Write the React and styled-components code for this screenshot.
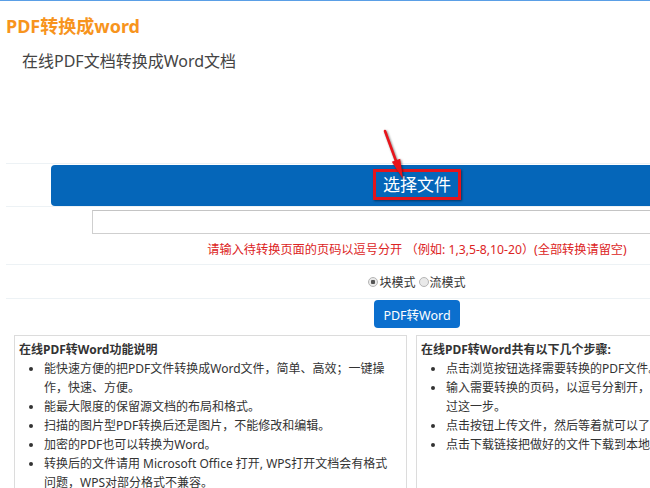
import React from "react";
import styled, { createGlobalStyle } from "styled-components";

const Global = createGlobalStyle`
  html, body { margin: 0; padding: 0; background: #fff; overflow: hidden; }
  body { font-family: "Noto Sans", "Noto Sans CJK SC", sans-serif; color: #333; }
  * { box-sizing: border-box; }
`;

const TopLine = styled.div`
  height: 1px;
  background: #5a9fe6;
`;

const Page = styled.div`
  position: relative;
  margin-left: 6px;
  width: 822px;
`;

const Title = styled.h1`
  margin: 15px 0 0;
  font-size: 18px;
  line-height: 21px;
  font-weight: 700;
  color: #f7941d;
`;

const Subtitle = styled.h2`
  margin: 14px 0 0;
  padding-left: 16px;
  font-size: 16px;
  line-height: 20px;
  font-weight: 400;
  color: #444;
`;

const Form = styled.div`
  margin-top: 92px;
`;

const BarRow = styled.div`
  border-top: 1px solid #edf2f5;
  border-bottom: 1px solid #edf2f5;
  padding: 1px 45px 0;
`;

const ChooseBar = styled.div`
  height: 41px;
  border-radius: 4px;
  background: #0566b9;
  display: flex;
  align-items: center;
  justify-content: center;
`;

const Marked = styled.span`
  display: inline-flex;
  align-items: center;
  justify-content: center;
  width: 88px;
  height: 31px;
  margin-top: -2px;
  border: 3px solid #e5141b;
  box-shadow: 1px 1px 2px rgba(0, 0, 0, 0.45);
  color: #fff;
  font-size: 17px;
  line-height: 20px;
`;

const Arrow = styled.svg`
  position: absolute;
  left: 369px;
  top: 110px;
  width: 36px;
  height: 60px;
  overflow: visible;
  filter: drop-shadow(1.5px 1.5px 1px rgba(0, 0, 0, 0.5));
`;

const InputWrap = styled.div`
  padding: 3px 80px 0 86px;
`;

const PageInput = styled.input`
  display: block;
  width: 100%;
  height: 24px;
  border: 1px solid #cfcfcf;
  border-top-color: #c4c4c4;
  outline: none;
  background: #fff;
`;

const Hint = styled.div`
  padding: 8px 0 6px;
  border-bottom: 1px solid #edf2f5;
  text-align: center;
  font-size: 12.2px;
  line-height: 16px;
  color: #dc2424;
`;

const RadioRow = styled.div`
  height: 34px;
  border-bottom: 1px solid #edf2f5;
  display: flex;
  align-items: center;
  justify-content: center;
  gap: 3px;
  font-size: 12px;
  color: #333;
`;

const RadioLabel = styled.label`
  display: inline-flex;
  align-items: center;
  gap: 1px;
`;

const RadioDot = styled.span`
  width: 10px;
  height: 10px;
  border-radius: 50%;
  border: 1px solid #b5b5b5;
  background: ${(p) => (p.$checked ? "radial-gradient(circle, #555 0 2px, #e9e9e9 2.5px)" : "#e9e9e9")};
`;

const SubmitRow = styled.div`
  display: flex;
  justify-content: center;
  padding-top: 1px;
`;

const Submit = styled.button`
  width: 86px;
  height: 28px;
  border: none;
  border-radius: 4px;
  background: #0b6fce;
  color: #fff;
  font-family: inherit;
  font-size: 12.5px;
  padding: 0;
`;

const Boxes = styled.div`
  margin: 7px 0 0 8px;
  display: grid;
  grid-template-columns: 393px 393px;
  gap: 9px;
`;

const Box = styled.div`
  border: 1px solid #dcdcdc;
  padding: 4px 8px 10px 4px;
  font-size: 12px;
  line-height: 19px;
  color: #333;
  min-height: 170px;
`;

const BoxTitle = styled.div`
  font-weight: 700;
`;

const List = styled.ul`
  margin: 0;
  padding-left: 25px;
  list-style: disc;
`;

const Item = styled.li`
  line-height: 19px;
`;

const leftItems = [
  ["能快速方便的把PDF文件转换成Word文件，简单、高效；一键操", "作，快速、方便。"],
  ["能最大限度的保留源文档的布局和格式。"],
  ["扫描的图片型PDF转换后还是图片，不能修改和编辑。"],
  ["加密的PDF也可以转换为Word。"],
  ["转换后的文件请用 Microsoft Office 打开, WPS打开文档会有格式", "问题，WPS对部分格式不兼容。"],
];

const rightItems = [
  ["点击浏览按钮选择需要转换的PDF文件。"],
  ["输入需要转换的页码，以逗号分割开，全部转换的话请跳", "过这一步。"],
  ["点击按钮上传文件，然后等着就可以了。"],
  ["点击下载链接把做好的文件下载到本地。"],
];

function Lines({ lines }) {
  return lines.map((l, i) => (
    <React.Fragment key={i}>
      {i > 0 && <br />}
      {l}
    </React.Fragment>
  ));
}

export default function App() {
  return (
    <>
      <Global />
      <TopLine />
      <Page>
        <Title>PDF转换成word</Title>
        <Subtitle>在线PDF文档转换成Word文档</Subtitle>
        <Form>
          <BarRow>
            <ChooseBar>
              <Marked>选择文件</Marked>
            </ChooseBar>
          </BarRow>
          <InputWrap>
            <PageInput type="text" />
          </InputWrap>
          <Hint>请输入待转换页面的页码以逗号分开 （例如: 1,3,5-8,10-20）(全部转换请留空)</Hint>
          <RadioRow>
            <RadioLabel>
              <RadioDot $checked />
              块模式
            </RadioLabel>
            <RadioLabel>
              <RadioDot />
              流模式
            </RadioLabel>
          </RadioRow>
          <SubmitRow>
            <Submit>PDF转Word</Submit>
          </SubmitRow>
          <Boxes>
            <Box>
              <BoxTitle>在线PDF转Word功能说明</BoxTitle>
              <List>
                {leftItems.map((t, i) => (
                  <Item key={i}>
                    <Lines lines={t} />
                  </Item>
                ))}
              </List>
            </Box>
            <Box>
              <BoxTitle>在线PDF转Word共有以下几个步骤:</BoxTitle>
              <List>
                {rightItems.map((t, i) => (
                  <Item key={i}>
                    <Lines lines={t} />
                  </Item>
                ))}
              </List>
            </Box>
          </Boxes>
        </Form>
        <Arrow viewBox="0 0 36 60">
          <line x1="10" y1="5" x2="21" y2="35" stroke="#e8141b" strokeWidth="2.6" strokeLinecap="round" />
          <polygon points="28,53 16.8,35.8 25.2,32.8" fill="#e8141b" />
        </Arrow>
      </Page>
    </>
  );
}
